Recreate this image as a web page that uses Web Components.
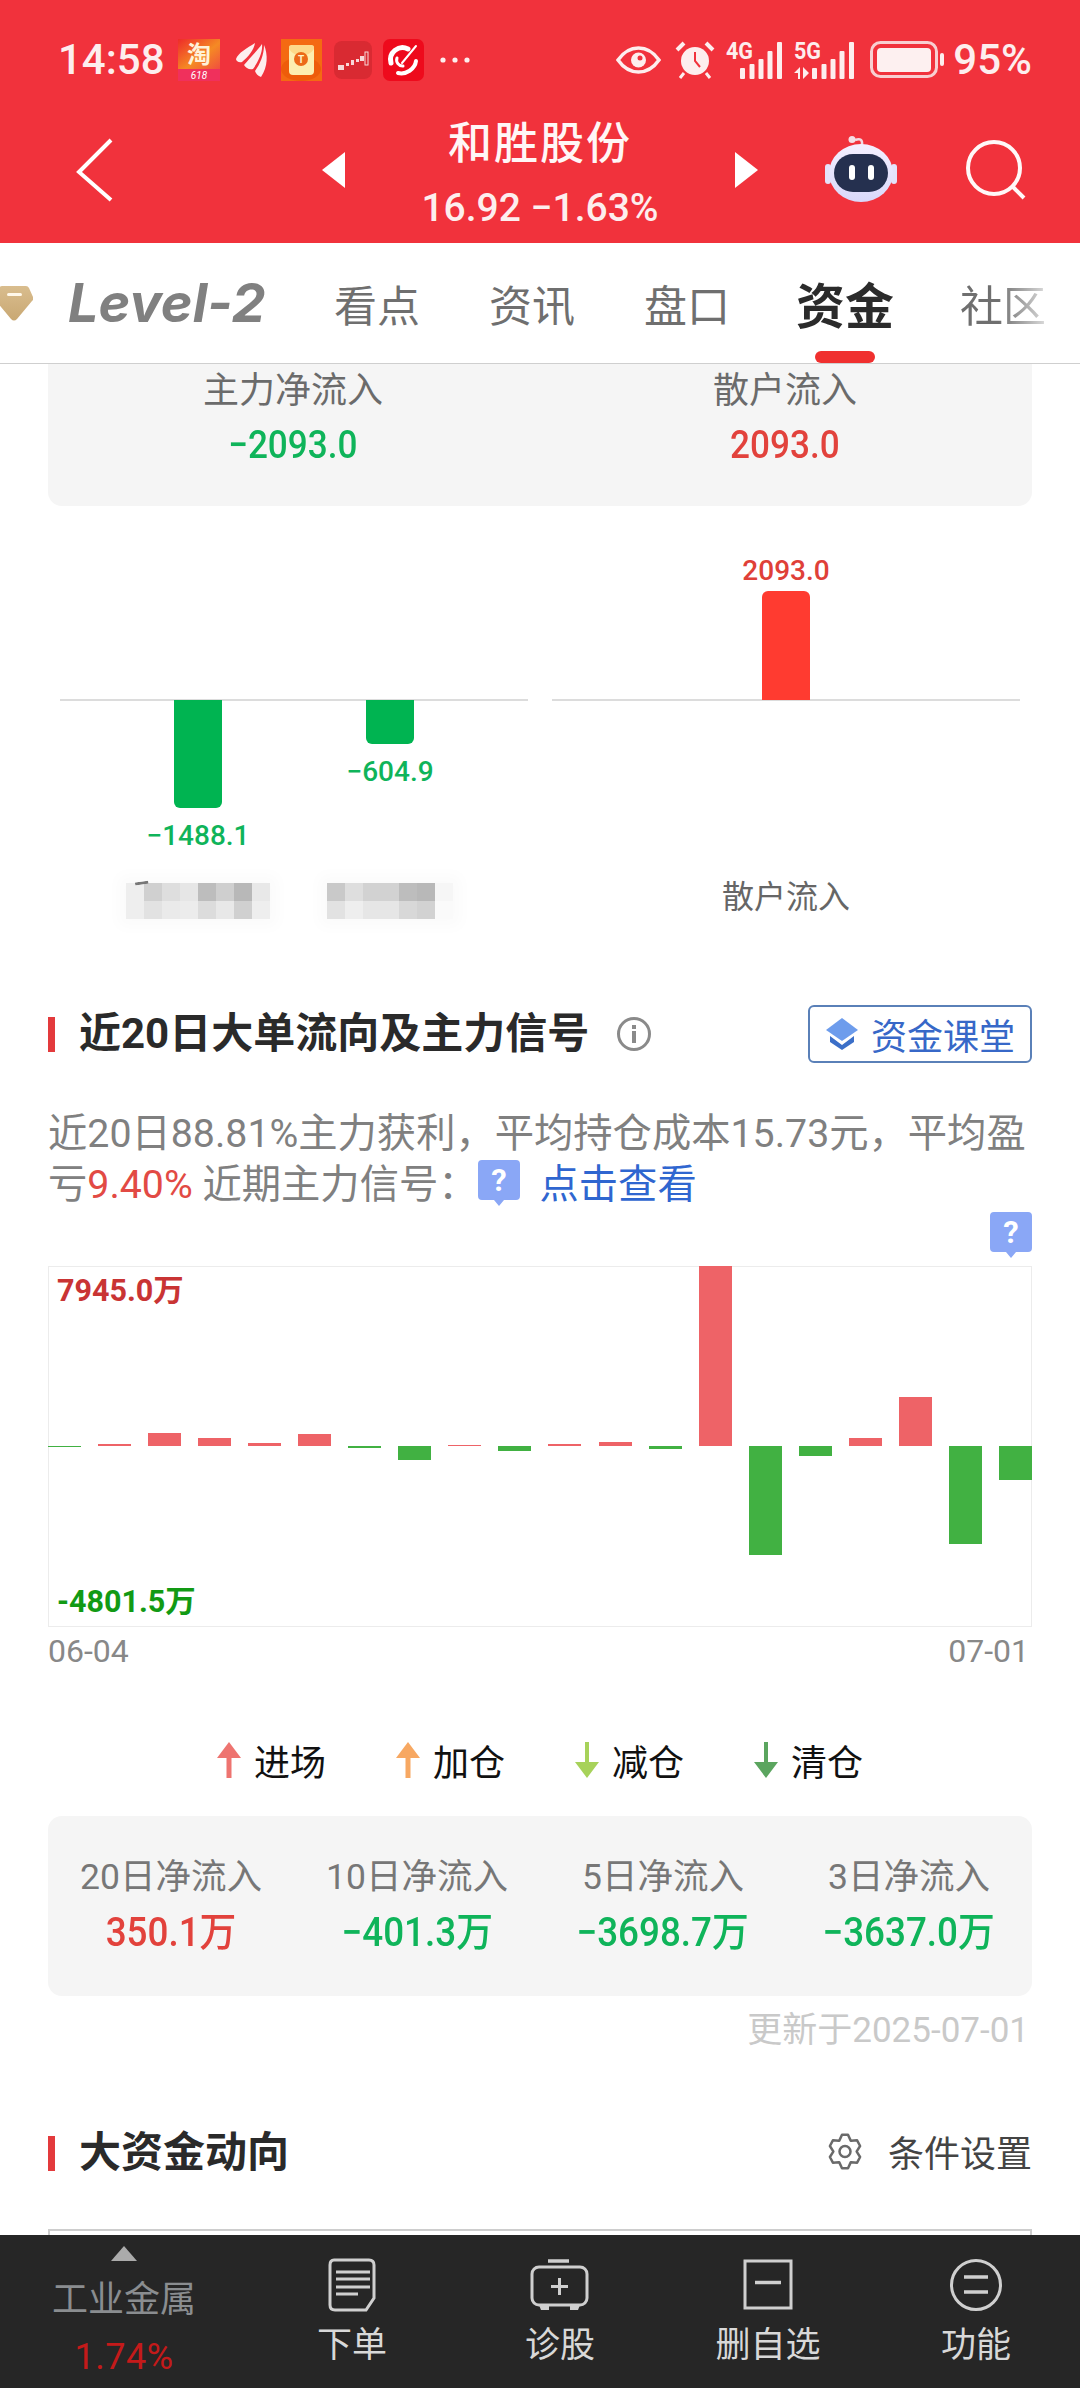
<!DOCTYPE html>
<html lang="zh-CN">
<head>
<meta charset="utf-8">
<title>和胜股份</title>
<style>
html,body{margin:0;padding:0;width:1080px;height:2388px;overflow:hidden;background:#fff;font-family:Roboto,"Noto Sans CJK SC",sans-serif}
</style>
</head>
<body>
<app-shell>
  <status-bar></status-bar>
  <nav-bar title="和胜股份" sub="16.92 −1.63%"></nav-bar>
  <tab-bar>
    <tab-item>看点</tab-item>
    <tab-item>资讯</tab-item>
    <tab-item>盘口</tab-item>
    <tab-item active>资金</tab-item>
    <tab-item fade>社区</tab-item>
  </tab-bar>
  <main-area slot="main">
    <stat-card cols="2" style="--h:142px;--pt:5px;--r:0 0 14px 14px;--fs:36px;--vs:39px;--sx:.9;--vm:9px;--c:#6b6b6b">
      <stat-item label="主力净流入" value="−2093.0" tone="down"></stat-item>
      <stat-item label="散户流入" value="2093.0" tone="up"></stat-item>
    </stat-card>
    <bar-panels>
      <bar-panel slot="left">
        <bar-group value="−1488.1" h="108"><mosaic-block cells="eeeeee,d0d0d0,dedede,e6e6e6,bdbdbd,cfcfcf,b8b8b8,e8e8e8,eeeeee,e2e2e2,eaeaea,ececec,dcdcdc,e8e8e8,d0d0d0,eeeeee" n="8" mark></mosaic-block></bar-group>
        <bar-group value="−604.9" h="44"><mosaic-block cells="c9c9c9,dedede,d2d2d2,d2d2d2,bdbdbd,b8b8b8,f6f6f6,e2e2e2,eeeeee,e6e6e6,e6e6e6,d8d8d8,d2d2d2,fafafa" n="7"></mosaic-block></bar-group>
      </bar-panel>
      <bar-panel slot="right">
        <bar-group value="2093.0" h="109" up>散户流入</bar-group>
      </bar-panel>
    </bar-panels>
    <section-head style="--mt:82px;--h:58px">
      近20日大单流向及主力信号
      <info-icon slot="after"></info-icon>
      <class-button slot="end">资金课堂</class-button>
    </section-head>
    <signal-text></signal-text>
    <flow-chart top="7945.0万" bottom="-4801.5万">
      <flow-bar v="-1"></flow-bar><flow-bar v="2"></flow-bar><flow-bar v="13"></flow-bar><flow-bar v="8"></flow-bar><flow-bar v="3"></flow-bar>
      <flow-bar v="12"></flow-bar><flow-bar v="-2"></flow-bar><flow-bar v="-14"></flow-bar><flow-bar v="1"></flow-bar><flow-bar v="-5"></flow-bar>
      <flow-bar v="2"></flow-bar><flow-bar v="4"></flow-bar><flow-bar v="-3"></flow-bar><flow-bar v="180"></flow-bar><flow-bar v="-109"></flow-bar>
      <flow-bar v="-10"></flow-bar><flow-bar v="8"></flow-bar><flow-bar v="49"></flow-bar><flow-bar v="-98"></flow-bar><flow-bar v="-34"></flow-bar>
    </flow-chart>
    <signal-legend>
      <legend-item dir="up" color="#ee7470">进场</legend-item>
      <legend-item dir="up" color="#f7a862">加仓</legend-item>
      <legend-item dir="down" color="#a7d25a">减仓</legend-item>
      <legend-item dir="down" color="#5ba55f">清仓</legend-item>
    </signal-legend>
    <stat-card cols="4" style="--h:180px;--pt:39px;--r:14px;--fs:35.500px;--vs:40px;--sx:.92;--vm:11px;--c:#777;margin-top:36px">
      <stat-item label="20日净流入" value="350.1万" tone="up"></stat-item>
      <stat-item label="10日净流入" value="−401.3万" tone="down"></stat-item>
      <stat-item label="5日净流入" value="−3698.7万" tone="down"></stat-item>
      <stat-item label="3日净流入" value="−3637.0万" tone="down"></stat-item>
    </stat-card>
    <update-note>更新于2025-07-01</update-note>
    <section-head style="--mt:82px;--h:40px">
      大资金动向
      <condition-set slot="end">条件设置</condition-set>
    </section-head>
    <table-stub></table-stub>
  </main-area>
  <dock-bar slot="dock">
    <dock-sector></dock-sector>
    <dock-item icon="order">下单</dock-item>
    <dock-item icon="diag">诊股</dock-item>
    <dock-item icon="del">删自选</dock-item>
    <dock-item icon="func">功能</dock-item>
  </dock-bar>
</app-shell>

<script>
function def(name, css, html, init){
  customElements.define(name, class extends HTMLElement{
    constructor(){
      super();
      const r=this.attachShadow({mode:"open"});
      const a=n=>this.getAttribute(n);
      const has=n=>this.hasAttribute(n);
      r.innerHTML="<style>"+css+"</style>"+(typeof html==="function"?html(a,has):html);
      if(init) init(r,a,has,this);
    }
  });
}

def("app-shell",
 ":host{display:flex;flex-direction:column;width:1080px;height:2388px;overflow:hidden;background:#fff}::slotted(main-area){flex:1;min-height:0}::slotted(dock-bar){flex:none}",
 '<slot></slot><slot name="main"></slot><slot name="dock"></slot>');

const SIG=(x0)=>`<g fill="#fdeeee"><rect x="${x0}" y="26" width="5" height="11" rx="1"/><rect x="${x0+9.500}" y="22" width="5" height="15" rx="1"/><rect x="${x0+18.500}" y="17" width="5" height="20" rx="1"/><rect x="${x0+27.500}" y="9" width="5" height="28" rx="1"/><rect x="${x0+37}" y="0" width="5" height="37" rx="1"/></g>`;

def("status-bar",
 `:host{display:flex;align-items:center;height:96px;padding:24px 48px 0 58px;box-sizing:border-box;background:#f1323c;color:#fdeeee}
  .t{font:500 42px/72px Roboto,sans-serif;width:120px;white-space:nowrap}
  svg{display:block;flex:none;overflow:visible}
  .apps{display:flex;align-items:center}
  .sp{flex:1}
  .pct{font:500 42px/72px Roboto,sans-serif;margin-left:8px}`,
 `<span class="t">14:58</span>
 <div class="apps">
  <svg width="42" height="42" viewBox="0 0 42 42"><defs><linearGradient id="tb" x1="0" y1="0" x2="1" y2="1"><stop offset="0" stop-color="#ee2a2a"/><stop offset=".55" stop-color="#f58a24"/><stop offset="1" stop-color="#f04a40"/></linearGradient></defs><rect width="42" height="32" fill="url(#tb)"/><rect y="30" width="42" height="12" fill="#f0305c"/><text x="21" y="24" text-anchor="middle" font-size="24" font-weight="700" fill="#fff2d8" font-family="Noto Sans CJK SC">淘</text><text x="21" y="40" text-anchor="middle" font-size="10" font-style="italic" fill="#fff" font-family="Roboto">618</text></svg>
  <svg style="margin-left:15px" width="33" height="36" viewBox="0 0 33 36"><g fill="#fdeeee"><path d="M1 17C3 11 12 6 20 1 19 8 13 15 7 20 4 21 1 19 1 17Z"/><path d="M9 23C14 17 22 9 27 2 28 10 23 20 18 27 14 28 11 26 9 23Z"/><path d="M20 29C25 22 29 13 29 3 33 12 33 25 26 35 23 34 21 32 20 29Z"/></g></svg>
  <svg style="margin-left:13px" width="41" height="42" viewBox="0 0 41 42"><rect width="41" height="42" fill="#f46a12"/><ellipse cx="20" cy="30" rx="20" ry="12" fill="#ee5c0a"/><rect x="8" y="6" width="25" height="30" rx="4" fill="#fdeeb0"/><path d="M8 10C14 19 27 19 33 10V8Q33 6 30 6H11Q8 6 8 8Z" fill="#fdd98a"/><circle cx="20" cy="20" r="7" fill="#ec6a18"/><text x="20" y="24" text-anchor="middle" font-size="10" font-weight="700" fill="#fff2c8" font-family="Roboto">T</text></svg>
  <svg style="margin-left:12px" width="38" height="38" viewBox="0 0 38 38"><rect width="38" height="38" rx="8" fill="#d92a32"/><g fill="#f8d8d8"><rect x="4" y="24" width="6" height="5"/><rect x="12" y="22" width="3" height="3"/><rect x="17" y="19" width="3" height="5"/><rect x="22" y="18" width="3" height="3"/><rect x="26" y="15" width="4" height="5"/></g><rect x="31" y="11" width="3" height="13" fill="none" stroke="#f8d8d8" stroke-width="1"/></svg>
  <svg style="margin-left:11px" width="41" height="42" viewBox="0 0 41 42"><rect width="41" height="42" rx="7" fill="#ee0a1c"/><g fill="none" stroke="#fff" stroke-linecap="round"><path d="M25 10A12 12 0 0 0 8 24" stroke-width="5"/><path d="M15 34C23 36 32 30 33 22" stroke-width="4"/><path d="M14 19A6 6 0 0 0 20 27" stroke-width="3"/><path d="M33 7L19 24" stroke-width="2"/></g></svg>
  <svg style="margin-left:16px" width="30" height="8" viewBox="0 0 30 8"><g fill="#fdeeee"><circle cx="3" cy="4" r="2.600"/><circle cx="15" cy="4" r="2.600"/><circle cx="27" cy="4" r="2.600"/></g></svg>
 </div>
 <span class="sp"></span>
 <svg width="45" height="28" viewBox="0 0 45 28"><path d="M2 14C9 4 16 2 22.500 2S36 4 43 14C36 24 29 26 22.500 26S9 24 2 14Z" fill="none" stroke="#fdeeee" stroke-width="3.500"/><circle cx="22.500" cy="14" r="7.500" fill="#fdeeee"/><circle cx="24" cy="12" r="2.500" fill="#f1323c"/></svg>
 <svg style="margin-left:15px" width="38" height="38" viewBox="0 0 38 38"><circle cx="19" cy="20" r="14" fill="#fdeeee"/><path d="M19 11V20L24 26" fill="none" stroke="#f1323c" stroke-width="2"/><path d="M1 9L8 2M37 9L30 2" stroke="#fdeeee" stroke-width="4"/><path d="M8 32L4 37M30 32L34 37" stroke="#fdeeee" stroke-width="3"/></svg>
 <svg style="margin-left:12px" width="56" height="37" viewBox="0 0 56 37"><text x="0" y="17" font-size="23" font-weight="700" fill="#fdeeee" font-family="Roboto" textLength="27" lengthAdjust="spacingAndGlyphs">4G</text>${SIG(14)}</svg>
 <svg style="margin-left:12px" width="61" height="37" viewBox="0 0 61 37"><text x="0" y="17" font-size="23" font-weight="700" fill="#fdeeee" font-family="Roboto" textLength="27" lengthAdjust="spacingAndGlyphs">5G</text><path d="M0 31L6 25V37H4V31ZM9 25L15 31 9 37Z" fill="#fdeeee"/>${SIG(18)}</svg>
 <svg style="margin-left:15px" width="75" height="38" viewBox="0 0 75 38"><rect x="1.500" y="1.500" width="65" height="34" rx="9" fill="none" stroke="#f8cfd1" stroke-width="3"/><rect x="7" y="7" width="54" height="24" rx="4" fill="#fdf0f0"/><rect x="70" y="12" width="4" height="13" rx="2" fill="#fdeeee"/></svg>
 <span class="pct">95%</span>`);

def("nav-bar",
 `:host{display:grid;grid-template-columns:322px 436px 322px;height:147px;background:#f1323c;color:#fff;align-items:center}
  .l{padding-left:75px}.r{display:flex;justify-content:flex-end;align-items:center;padding-right:54px;gap:69px}
  svg{display:block}
  .c{display:flex;align-items:center;justify-content:space-between;height:100%}
  .m{display:flex;flex-direction:column;align-items:center;height:100%;padding-top:17px;box-sizing:border-box}
  .tt{font:500 44px/54px "Noto Sans CJK SC",sans-serif;letter-spacing:2px;color:#fff6f6}
  .sb{font:500 39px/40px Roboto,"Noto Sans CJK SC",sans-serif;margin-top:21px;color:#fdeeee;white-space:pre}`,
 a=>`<div class="l"><svg width="38" height="64" viewBox="0 0 38 64"><path d="M36 2L4 34 36 62" fill="none" stroke="#fff" stroke-width="4"/></svg></div>
 <div class="c">
  <svg width="23" height="36" viewBox="0 0 23 36"><path d="M23 0V36L0 18Z" fill="#fff"/></svg>
  <div class="m"><div class="tt">${a("title")}</div><div class="sb">${a("sub")}</div></div>
  <svg width="23" height="36" viewBox="0 0 23 36"><path d="M0 0V36L23 18Z" fill="#fff"/></svg>
 </div>
 <div class="r">
  <svg width="72" height="68" viewBox="0 0 72 68"><defs><linearGradient id="rb" x1="0" y1="0" x2="0" y2="1"><stop offset="0" stop-color="#f4f0ff"/><stop offset="1" stop-color="#d9d8fa"/></linearGradient></defs><path d="M30 4Q38 1 37 9" fill="none" stroke="#f3d8e0" stroke-width="2.500"/><circle cx="27" cy="3.500" r="3.500" fill="#f5dde4"/><rect x="0" y="28" width="6" height="20" rx="3" fill="#e4e2fa"/><rect x="66" y="28" width="6" height="20" rx="3" fill="#e4e2fa"/><ellipse cx="36" cy="37" rx="32" ry="29" fill="url(#rb)"/><rect x="9" y="18" width="54" height="38" rx="19" fill="#25304f"/><rect x="24" y="29" width="6" height="15" rx="3" fill="#fff"/><rect x="43" y="29" width="6" height="15" rx="3" fill="#fff"/></svg>
  <svg width="60" height="60" viewBox="0 0 60 60"><circle cx="28" cy="28" r="26" fill="none" stroke="#fff8f8" stroke-width="4"/><path d="M47 47L58 58" stroke="#fff8f8" stroke-width="4"/></svg>
 </div>`);

def("tab-bar",
 `:host{display:flex;height:121px;border-bottom:1px solid #cfcfcf;box-sizing:border-box;background:#fff;overflow:hidden;align-items:stretch}
  svg{display:block;align-self:center;flex:none;margin-top:0}
  .lv{align-self:center;font:italic 700 54px/60px Inter,Roboto,sans-serif;color:#808080;margin-left:35px;width:204px;flex:none;white-space:nowrap}
  .tabs{display:flex;gap:69px;margin-left:62px}`,
 `<svg width="33" height="36" viewBox="0 0 33 36"><defs><linearGradient id="gd" x1="0" y1="0" x2="0" y2="1"><stop offset="0" stop-color="#d9bd8e"/><stop offset="1" stop-color="#c9a873"/></linearGradient></defs><path d="M6 1H26Q28 1 29 3L33 12Q34 14 32 16L17 34Q14 37 11 34L-4 16Q-6 14 -5 12L-1 3Q0 1 2 1Z" fill="url(#gd)"/><rect x="7" y="8" width="15" height="3" rx="1.500" fill="#fff8ea"/></svg>
 <div class="lv">Level-2</div><div class="tabs"><slot></slot></div>`);

def("tab-item",
 `:host{display:flex;align-items:center;position:relative;font:400 43px/60px "Noto Sans CJK SC",sans-serif;color:#6f6f6f;flex:none;height:120px}
  :host([active]){font-weight:700;font-size:49px;color:#2b2b2b;margin:0 -3px}
  :host([active])::after{content:"";position:absolute;left:50%;margin-left:-30px;bottom:0;width:60px;height:12px;background:#f0302f;border-radius:6px}
  :host([fade]) span{-webkit-mask-image:linear-gradient(90deg,#000 45%,rgba(0,0,0,.25) 100%);mask-image:linear-gradient(90deg,#000 45%,rgba(0,0,0,.25) 100%)}
  span{display:block}`,
 '<span><slot></slot></span>');

def("main-area",
 ":host{display:block;padding:0 48px;overflow:hidden}",
 "<slot></slot>");

def("stat-card",
 `:host{display:grid;height:var(--h);padding-top:var(--pt);box-sizing:border-box;background:#f5f5f5;border-radius:var(--r);align-content:start}
  :host([cols="2"]){grid-template-columns:490px 494px}
  :host([cols="4"]){grid-template-columns:repeat(4,1fr)}`,
 "<slot></slot>");

def("stat-item",
 `:host{display:flex;flex-direction:column;align-items:center}
  .l{font:400 var(--fs)/44px Roboto,"Noto Sans CJK SC",sans-serif;color:var(--c);white-space:nowrap}
  .v{font:500 var(--vs)/46px Roboto,"Noto Sans CJK SC",sans-serif;margin-top:var(--vm);white-space:nowrap;transform:scaleX(var(--sx))}
  .up{color:#e2423c}.down{color:#0fb45a}`,
 a=>`<div class="l">${a("label")}</div><div class="v ${a("tone")}">${a("value")}</div>`);

def("bar-panels",
 `:host{display:flex;gap:24px;margin:0 12px;height:417px}`,
 '<slot name="left"></slot><slot name="right"></slot>');

def("bar-panel",
 `:host{display:flex;justify-content:center;width:468px;position:relative}
  :host::before{content:"";position:absolute;left:0;right:0;top:193px;height:2px;background:#dcdcdc}`,
 "<slot></slot>");

def("bar-group",
 `:host{display:grid;grid-template-rows:194px 171px 52px;width:192px;justify-items:center;position:relative}
  .top,.bot{display:flex;flex-direction:column;align-items:center}
  .top{justify-content:flex-end}
  .bar{width:48px;background:#00b451}
  .bot .bar{border-radius:0 0 6px 6px}
  .top .bar{background:#ff3b30;border-radius:6px 6px 0 0;margin-top:5px}
  .n{font:500 28px/30px Roboto,sans-serif;white-space:nowrap}
  .top .n{color:#df4038}.bot .n{color:#0fb45a;margin-top:13px}
  .lab{font:400 32px/52px "Noto Sans CJK SC",sans-serif;color:#666;align-self:center;display:flex;justify-content:center;align-items:center;height:52px}
  .lab.up{padding-bottom:6px;box-sizing:border-box}
  ::slotted(mosaic-block){margin-top:8px}`,
 (a,has)=>{
  const n=`<div class="n">${a("value")}</div>`, b=`<div class="bar" style="height:${a("h")}px"></div>`;
  return has("up")?`<div class="top">${n}${b}</div><div class="bot"></div><div class="lab up"><slot></slot></div>`
                  :`<div class="top"></div><div class="bot">${b}${n}</div><div class="lab"><slot></slot></div>`;
 });

def("mosaic-block",
 `:host{display:grid;position:relative;box-shadow:0 0 14px 8px rgba(0,0,0,.018)}
  i{display:block;width:18px;height:18px}
  :host([mark])::before{content:"";position:absolute;left:9px;top:-2px;width:22px;height:3px;background:#777;transform:rotate(-8deg);clip-path:polygon(0 0,60% 0,60% 100%,0 100%)}`,
 a=>a("cells").split(",").map(c=>`<i style="background:#${c}"></i>`).join(""),
 (r,a,h,el)=>{el.style.gridTemplateColumns=`repeat(${a("n")},18px)`;});

def("section-head",
 `:host{display:flex;align-items:center;margin-top:var(--mt);height:var(--h);font:700 42px/58px Roboto,"Noto Sans CJK SC",sans-serif;color:#2a2a2a;white-space:nowrap}
  .b{width:7px;height:35px;background:#e33a3c;margin-right:24px;flex:none}
  .sp{flex:1}`,
 '<i class="b"></i><span class="w"><slot></slot></span><slot name="after"></slot><span class="sp"></span><slot name="end"></slot>');

def("info-icon",
 `:host{display:block;margin-left:27px}svg{display:block}`,
 `<svg width="36" height="36" viewBox="0 0 36 36"><circle cx="18" cy="18" r="15.500" fill="none" stroke="#8a8a8a" stroke-width="3"/><rect x="16" y="15" width="4" height="12" fill="#8a8a8a"/><rect x="16" y="9" width="4" height="4" fill="#8a8a8a"/></svg>`);

def("class-button",
 `:host{display:flex;align-items:center;height:58px;width:224px;box-sizing:border-box;border:2px solid #5a80b8;border-radius:6px;padding-left:15px;font:400 36px/54px "Noto Sans CJK SC",sans-serif;color:#3768c8}
  svg{display:block;margin-right:12px;flex:none}`,
 `<svg width="34" height="34" viewBox="0 0 34 34"><path d="M17 1L33 13 17 24 1 13Z" fill="#6d9cec"/><path d="M5 19L17 28 29 19V25L17 33 5 25Z" fill="#3b6fc8"/></svg><slot></slot>`);

def("condition-set",
 `:host{display:flex;align-items:center;font:400 36px/40px "Noto Sans CJK SC",sans-serif;color:#444;margin-bottom:4px}
  svg{display:block;margin-right:25px;flex:none}`,
 `<svg width="36" height="37" viewBox="0 0 36 37"><path id="g" fill="none" stroke="#6a6a6a" stroke-width="2.500" stroke-linejoin="round"/><circle cx="18" cy="18.500" r="5.500" fill="none" stroke="#6a6a6a" stroke-width="2.500"/></svg><slot></slot>`,
 r=>{
  let d="";
  for(let i=0;i<6;i++){
    const c=-90+i*60, P=(rad,deg)=>{const t=(c+deg)*Math.PI/180;return (18+rad*Math.cos(t)*.94).toFixed(1)+" "+(18.5+rad*Math.sin(t)).toFixed(1);};
    d+=(i?"L":"M")+P(12.5,-29)+"L"+P(17,-11)+"L"+P(17,11)+"L"+P(12.5,29);
  }
  r.getElementById("g").setAttribute("d",d+"Z");
 });

def("help-bubble",
 `:host{display:inline-block;vertical-align:middle;width:42px;height:47px}svg{display:block;overflow:visible}`,
 `<svg width="42" height="47" viewBox="0 0 42 47"><path d="M4 0H38Q42 0 42 4V36Q42 40 38 40H26L21 46 16 40H4Q0 40 0 36V4Q0 0 4 0Z" fill="#8aa7f6"/><text x="21" y="31" text-anchor="middle" font-size="31" font-weight="700" fill="#fff" font-family="Roboto">?</text></svg>`);

def("signal-text",
 `:host{display:block;margin-top:46px;font:400 39.300px/51px Roboto,"Noto Sans CJK SC",sans-serif;color:#808080;word-break:break-all;height:102px}
  .r{color:#e24a44}.l{color:#2f66d0;margin-left:20px}
  .q{display:inline-block;width:42px;height:40px;vertical-align:-5px;position:relative}
  help-bubble{position:absolute;left:0;top:-3px}`,
 `近20日88.81%主力获利，平均持仓成本15.73元，平均盈亏<span class="r">9.40%</span> 近期主力信号：<span class="q"><help-bubble></help-bubble></span><span class="l">点击查看</span>`);

def("flow-chart",
 `:host{display:block;margin-top:55px;position:relative}
  .head{display:flex;justify-content:flex-end;height:0}
  .head help-bubble{position:relative;top:-54px}
  .box{display:flex;justify-content:space-between;height:361px;box-shadow:inset 0 0 0 1px #ececec;overflow:hidden}
  .lb{position:absolute;left:9px;font:700 30.500px/36px Roboto,"Noto Sans CJK SC",sans-serif;white-space:nowrap}
  .t{top:7px;color:#c93434}.b{top:318px;color:#129a14}
  .dates{display:flex;justify-content:space-between;padding-right:3px;margin-top:7px;font:400 32px/34px Roboto,sans-serif;color:#888}`,
 a=>`<div class="head"><help-bubble></help-bubble></div><div class="box"><slot></slot></div>
 <div class="lb t">${a("top")}</div><div class="lb b">${a("bottom")}</div>
 <div class="dates"><span>06-04</span><span>07-01</span></div>`);

def("flow-bar",
 `:host{display:grid;grid-template-rows:180px 181px;width:33px;flex:none}
  i{display:block;grid-row:1;align-self:end}
  i.n{grid-row:2;align-self:start;background:#41b142}
  i.p{background:#ee6367}`,
 a=>{const v=+a("v");return `<i class="${v<0?"n":"p"}" style="height:${Math.abs(v)}px"></i>`;});

def("signal-legend",
 `:host{display:flex;justify-content:center;gap:70px;margin-top:72px;height:40px}`,
 "<slot></slot>");

def("legend-item",
 `:host{display:flex;align-items:center;font:400 36px/40px "Noto Sans CJK SC",sans-serif;color:#111}
  svg{display:block;margin-right:13px;flex:none}`,
 a=>{
  const c=a("color");
  const p=a("dir")==="up"?'<path d="M12 0L24 16H14.500V36H9.500V16H0Z" fill="'+c+'"/>':'<path d="M12 36L24 20H14V0H10V20H0Z" fill="'+c+'"/>';
  return `<svg width="24" height="36" viewBox="0 0 24 36">${p}</svg><slot></slot>`;
 });

def("update-note",
 `:host{display:block;text-align:right;margin-top:15px;padding-right:3px;font:400 35px/40px Roboto,"Noto Sans CJK SC",sans-serif;color:#c9c9c9}`,
 "<slot></slot>");

def("table-stub",
 `:host{display:block;margin-top:56px;height:120px;box-sizing:border-box;border:2px solid #cdcdcd;border-bottom:0}`,
 "");

def("dock-bar",
 `:host{display:grid;grid-template-columns:248px repeat(4,208px);height:153px;background:#262626;overflow:hidden}`,
 "<slot></slot>");

def("dock-sector",
 `:host{display:flex;flex-direction:column;align-items:center;padding-top:11px}
  svg{display:block}
  .l{font:400 36px/42px "Noto Sans CJK SC",sans-serif;color:#8a8d90;margin-top:14px}
  .v{font:400 36px/44px Roboto,sans-serif;color:#c41a1a;margin-top:18px;letter-spacing:.5px}`,
 `<svg width="26" height="15" viewBox="0 0 26 15"><path d="M13 0L26 15H0Z" fill="#ababab"/></svg><div class="l">工业金属</div><div class="v">1.74%</div>`);

const DOCK={
 order:'<g transform="translate(6 0)"><path d="M6 2H41Q46 2 46 7V40L38 52H7Q2 52 2 47V7Q2 2 6 2Z" fill="none" stroke="#cfcfcf" stroke-width="3"/><path d="M8 14H42M8 21H42M8 29H42M8 36H30" stroke="#cfcfcf" stroke-width="3" fill="none"/></g>',
 diag:'<path d="M18 3H39" stroke="#cfcfcf" stroke-width="3.500"/><rect x="2" y="9" width="55" height="38" rx="7" fill="none" stroke="#cfcfcf" stroke-width="3"/><path d="M9 47H19V52H11ZM40 47H50L48 52H40Z" fill="#cfcfcf"/><path d="M29.500 20V37M21 28.500H38" stroke="#cfcfcf" stroke-width="3" fill="none"/>',
 del:'<g transform="translate(5 0)"><rect x="2" y="3" width="46" height="47" fill="none" stroke="#cfcfcf" stroke-width="3"/><path d="M12 24.500H38" stroke="#cfcfcf" stroke-width="3.500"/></g>',
 func:'<g transform="translate(4 0)"><ellipse cx="26" cy="27" rx="24.500" ry="24.500" fill="none" stroke="#cfcfcf" stroke-width="3"/><path d="M14 19H38M14 34H38" stroke="#cfcfcf" stroke-width="3.500"/></g>'
};
def("dock-item",
 `:host{display:flex;flex-direction:column;align-items:center;padding-top:23px;font:400 35px/42px "Noto Sans CJK SC",sans-serif;color:#d8d8d8}
  svg{display:block}
  .t{margin-top:7px;white-space:nowrap}`,
 a=>`<svg width="60" height="56" viewBox="0 0 60 56">${DOCK[a("icon")]}</svg><div class="t"><slot></slot></div>`);
</script>
</body>
</html>
